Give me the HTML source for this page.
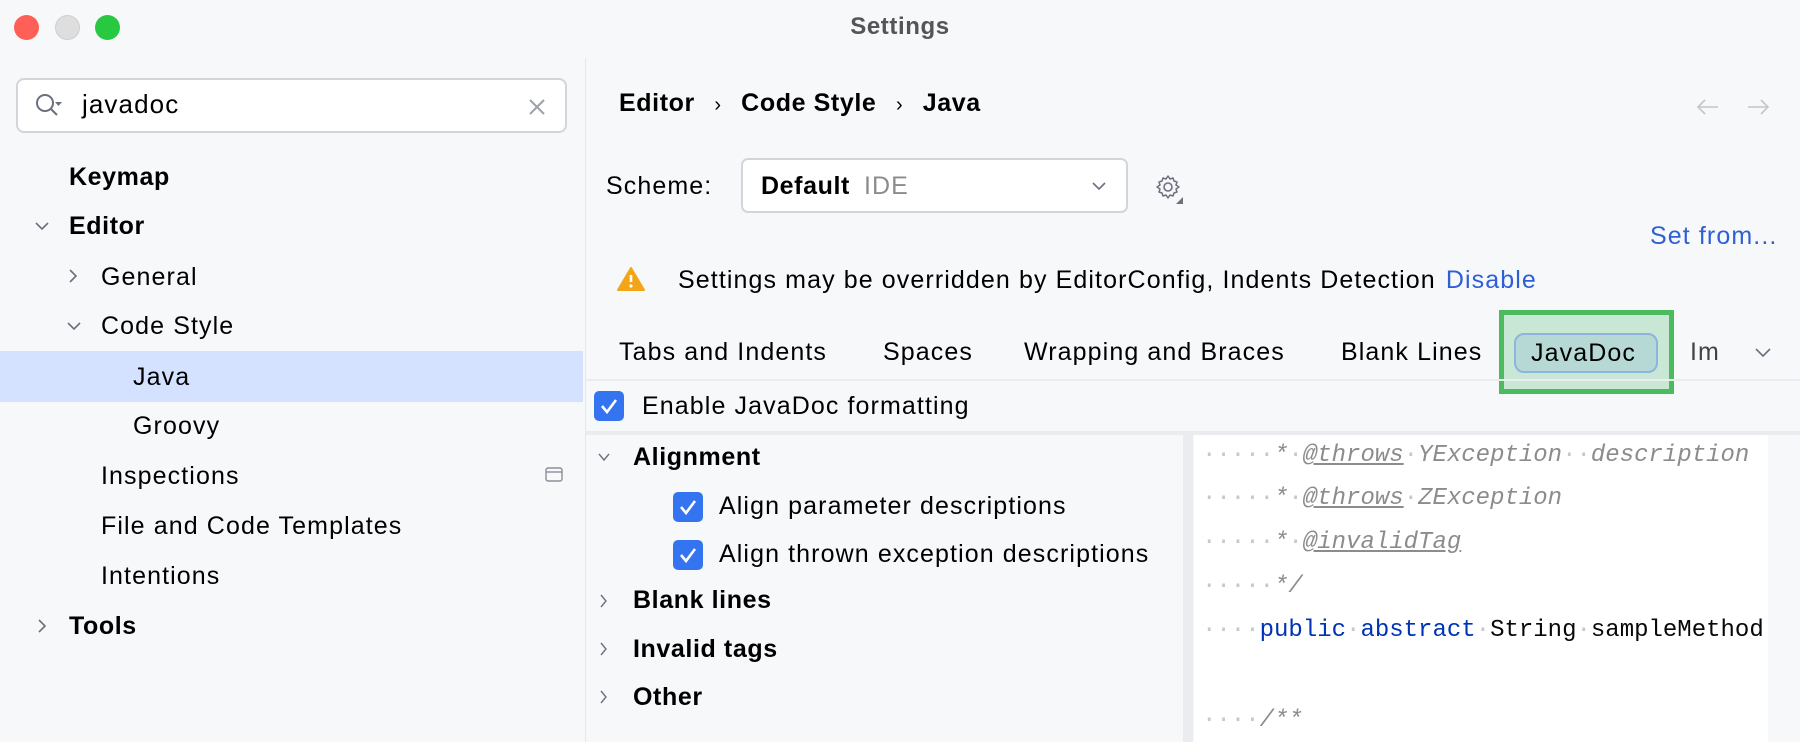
<!DOCTYPE html>
<html><head><meta charset="utf-8"><style>
*{margin:0;padding:0;box-sizing:border-box}
body{width:1800px;height:742px;overflow:hidden;background:#f7f8fa;font-family:"Liberation Sans",sans-serif;color:#000;position:relative}
.a{position:absolute;white-space:nowrap}
.t{font-size:25px;line-height:30px;letter-spacing:1.1px}
.b{font-weight:bold;letter-spacing:0.6px}
.mono{font-family:"Liberation Mono",monospace;font-size:24px;line-height:28px;color:#8c8c8c;font-style:italic}
.dot{color:#c8c8c8;font-style:normal}
.cb{position:absolute;width:30px;height:30px;background:#3574f0;border-radius:5px}
.cb svg{position:absolute;left:5px;top:6px}
</style></head><body>
<div class="a" style="left:14px;top:15px;width:25px;height:25px;border-radius:50%;background:#fe5f57"></div>
<div class="a" style="left:55px;top:15px;width:25px;height:25px;border-radius:50%;background:#dedede;border:1px solid #cfcfcf"></div>
<div class="a" style="left:95px;top:15px;width:25px;height:25px;border-radius:50%;background:#28c840"></div>
<div class="a t b" style="left:0;width:1800px;text-align:center;top:12px;color:#555;font-size:24px">Settings</div>
<div class="a" style="left:585px;top:58px;width:1px;height:684px;background:#e6e7ea"></div>
<div class="a" style="left:16px;top:78px;width:551px;height:55px;background:#fff;border:2px solid #d3d5db;border-radius:8px"></div>
<svg class="a" style="left:34px;top:92px" width="30" height="28"><circle cx="11" cy="11" r="8" fill="none" stroke="#6c707e" stroke-width="2"/><path d="M17 17l6 6" stroke="#6c707e" stroke-width="2"/><path d="M21 10h7l-3.5 4z" fill="#6c707e"/></svg>
<div class="a t" style="left:82px;top:89px;font-size:26px">javadoc</div>
<svg class="a" style="left:528px;top:98px" width="18" height="18"><path d="M2 2l14 14M16 2L2 16" stroke="#9ea1aa" stroke-width="2"/></svg>
<div class="a" style="left:0;top:351px;width:583px;height:51px;background:#d4e2ff"></div>
<svg class="a" style="left:34px;top:220px" width="16" height="12"><path d="M2 3l6 6 6-6" fill="none" stroke="#6c707e" stroke-width="1.6"/></svg>
<svg class="a" style="left:67px;top:268px" width="12" height="16"><path d="M3 2l6 6-6 6" fill="none" stroke="#6c707e" stroke-width="1.6"/></svg>
<svg class="a" style="left:66px;top:320px" width="16" height="12"><path d="M2 3l6 6 6-6" fill="none" stroke="#6c707e" stroke-width="1.6"/></svg>
<svg class="a" style="left:36px;top:618px" width="12" height="16"><path d="M3 2l6 6-6 6" fill="none" stroke="#6c707e" stroke-width="1.6"/></svg>
<div class="a t b" style="left:69px;top:162px">Keymap</div>
<div class="a t b" style="left:69px;top:211px">Editor</div>
<div class="a t" style="left:101px;top:262px">General</div>
<div class="a t" style="left:101px;top:311px">Code Style</div>
<div class="a t" style="left:133px;top:362px">Java</div>
<div class="a t" style="left:133px;top:411px">Groovy</div>
<div class="a t" style="left:101px;top:461px">Inspections</div>
<svg class="a" style="left:545px;top:467px" width="18" height="16"><rect x="1" y="1" width="16" height="13" rx="2" fill="none" stroke="#8c8f99" stroke-width="1.4"/><path d="M1 5h16" stroke="#8c8f99" stroke-width="1.4"/></svg>
<div class="a t" style="left:101px;top:511px">File and Code Templates</div>
<div class="a t" style="left:101px;top:561px">Intentions</div>
<div class="a t b" style="left:69px;top:611px">Tools</div>
<div class="a t b" style="left:619px;top:88px">Editor <span style="font-weight:normal;margin:0 12px;font-size:20px">›</span> Code Style <span style="font-weight:normal;margin:0 12px;font-size:20px">›</span> Java</div>
<svg class="a" style="left:1694px;top:96px" width="80" height="22"><path d="M24 11H4M11 4l-7 7 7 7" fill="none" stroke="#c4c6cc" stroke-width="1.6"/><path d="M54 11h20M67 4l7 7-7 7" fill="none" stroke="#c4c6cc" stroke-width="1.6"/></svg>
<div class="a t" style="left:606px;top:171px">Scheme:</div>
<div class="a" style="left:741px;top:158px;width:387px;height:55px;background:#fff;border:2px solid #d3d5db;border-radius:7px"></div>
<div class="a t" style="left:761px;top:171px"><b class="b">Default</b> <span style="color:#8c8c8c;margin-left:6px">IDE</span></div>
<svg class="a" style="left:1091px;top:180px" width="16" height="12"><path d="M2 3l6 6 6-6" fill="none" stroke="#6c707e" stroke-width="1.6"/></svg>
<svg class="a" style="left:1153px;top:172px" width="32" height="34"><circle cx="15" cy="15" r="4" fill="none" stroke="#6c707e" stroke-width="1.6"/><path d="M15 4l2 3 3-1 1 3 3 1-1 3 3 2-3 2 1 3-3 1-1 3-3-1-2 3-2-3-3 1-1-3-3-1 1-3-3-2 3-2-1-3 3-1 1-3 3 1z" fill="none" stroke="#6c707e" stroke-width="1.5" stroke-linejoin="round"/><path d="M30 25v7h-7z" fill="#6c707e"/></svg>
<div class="a t" style="left:1650px;top:221px;color:#2e5fd6">Set from...</div>
<svg class="a" style="left:617px;top:266px" width="28" height="26"><path d="M14 2L27 24H1z" fill="#f2a517" stroke="#f2a517" stroke-linejoin="round" stroke-width="2"/><path d="M14 9v7" stroke="#fff" stroke-width="2.6"/><circle cx="14" cy="20" r="1.6" fill="#fff"/></svg>
<div class="a t" style="left:678px;top:265px">Settings may be overridden by EditorConfig, Indents Detection <span style="color:#2e5fd6;margin-left:2px">Disable</span></div>
<div class="a t" style="left:619px;top:337px">Tabs and Indents</div>
<div class="a t" style="left:883px;top:337px">Spaces</div>
<div class="a t" style="left:1024px;top:337px">Wrapping and Braces</div>
<div class="a t" style="left:1341px;top:337px">Blank Lines</div>
<div class="a" style="left:1499px;top:310px;width:175px;height:84px;background:#c9e7d5;border:5px solid #4cba5e"></div>
<div class="a" style="left:1514px;top:333px;width:144px;height:40px;background:#b6d9d6;border:2px solid #8eb4dc;border-radius:10px"></div>
<div class="a t" style="left:1531px;top:338px">JavaDoc</div>
<div class="a t" style="left:1690px;top:337px;color:#444;width:30px;overflow:hidden">Imp</div>
<svg class="a" style="left:1754px;top:346px" width="18" height="12"><path d="M2 3l7 7 7-7" fill="none" stroke="#6c707e" stroke-width="1.6"/></svg>
<div class="a" style="left:586px;top:379px;width:1214px;height:2px;background:#ebecf0"></div>
<div class="cb" style="left:594px;top:391px"><svg width="20" height="18"><path d="M3 9l5 6 9-12" fill="none" stroke="#fff" stroke-width="2.6"/></svg></div>
<div class="a t" style="left:642px;top:391px">Enable JavaDoc formatting</div>
<div class="a" style="left:586px;top:431px;width:1214px;height:4px;background:#ebecf0"></div>
<div class="a" style="left:1183px;top:435px;width:10px;height:307px;background:#ebecf0"></div>
<svg class="a" style="left:597px;top:451px" width="14" height="12"><path d="M2 3l5 6 5-6" fill="none" stroke="#6c707e" stroke-width="1.4"/></svg>
<div class="a t b" style="left:633px;top:442px">Alignment</div>
<div class="cb" style="left:673px;top:492px"><svg width="20" height="18"><path d="M3 9l5 6 9-12" fill="none" stroke="#fff" stroke-width="2.6"/></svg></div>
<div class="a t" style="left:719px;top:491px">Align parameter descriptions</div>
<div class="cb" style="left:673px;top:540px"><svg width="20" height="18"><path d="M3 9l5 6 9-12" fill="none" stroke="#fff" stroke-width="2.6"/></svg></div>
<div class="a t" style="left:719px;top:539px">Align thrown exception descriptions</div>
<svg class="a" style="left:598px;top:593px" width="12" height="16"><path d="M3 2l5 6-5 6" fill="none" stroke="#6c707e" stroke-width="1.4"/></svg>
<div class="a t b" style="left:633px;top:585px">Blank lines</div>
<svg class="a" style="left:598px;top:641px" width="12" height="16"><path d="M3 2l5 6-5 6" fill="none" stroke="#6c707e" stroke-width="1.4"/></svg>
<div class="a t b" style="left:633px;top:634px">Invalid tags</div>
<svg class="a" style="left:598px;top:689px" width="12" height="16"><path d="M3 2l5 6-5 6" fill="none" stroke="#6c707e" stroke-width="1.4"/></svg>
<div class="a t b" style="left:633px;top:682px">Other</div>
<div class="a" style="left:1194px;top:435px;width:574px;height:307px;background:#fff;overflow:hidden">
<div class="a mono" style="left:8px;top:7px"><span class="dot">·····</span>*<span class="dot">·</span><u>@throws</u><span class="dot">·</span>YException<span class="dot">··</span>description</div>
<div class="a mono" style="left:8px;top:50px"><span class="dot">·····</span>*<span class="dot">·</span><u>@throws</u><span class="dot">·</span>ZException</div>
<div class="a mono" style="left:8px;top:94px"><span class="dot">·····</span>*<span class="dot">·</span><u>@invalidTag</u></div>
<div class="a mono" style="left:8px;top:138px"><span class="dot">·····</span>*/</div>
<div class="a mono" style="left:8px;top:182px;font-style:normal;color:#080808"><span class="dot">····</span><span style="color:#0033b3">public</span><span class="dot">·</span><span style="color:#0033b3">abstract</span><span class="dot">·</span>String<span class="dot">·</span>sampleMethod</div>
<div class="a mono" style="left:8px;top:272px"><span class="dot">····</span>/**</div>
</div>
<div class="a" style="left:1768px;top:435px;width:32px;height:307px;background:#f7f8fa"></div>
</body></html>
